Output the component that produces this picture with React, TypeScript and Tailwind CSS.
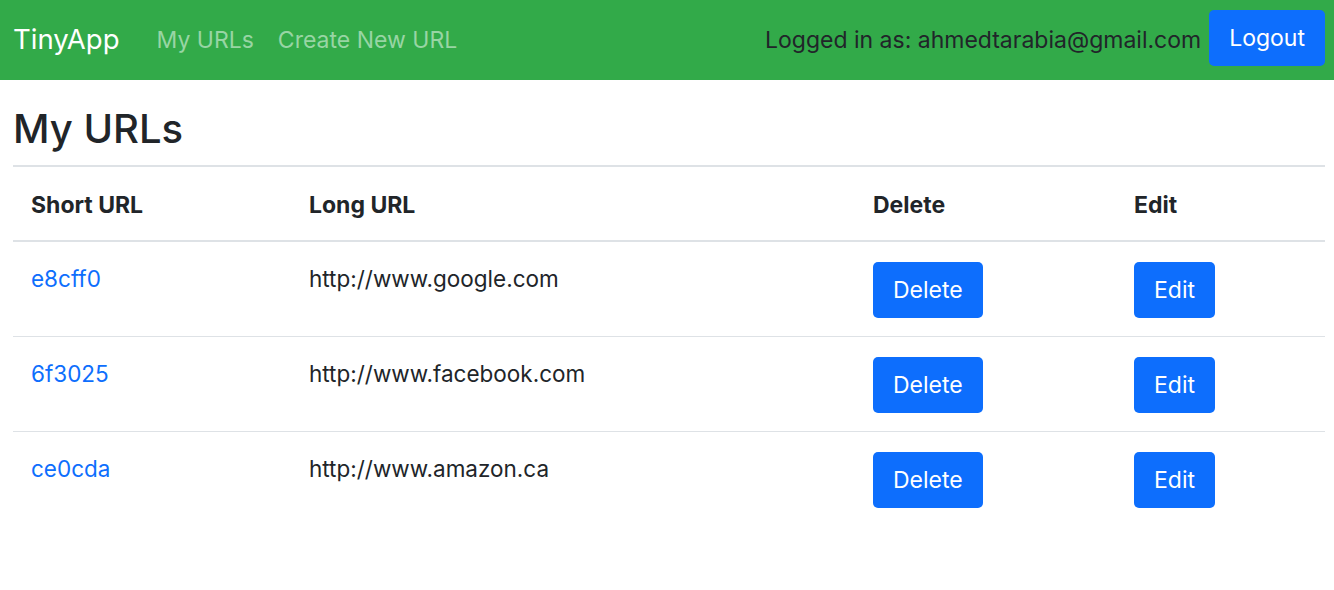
import React from "react";

type UrlRow = {
  short: string;
  long: string;
};

const urls: UrlRow[] = [
  { short: "e8cff0", long: "http://www.google.com" },
  { short: "6f3025", long: "http://www.facebook.com" },
  { short: "ce0cda", long: "http://www.amazon.ca" },
];

function BlueButton({ label, className = "" }: { label: string; className?: string }) {
  return (
    <button
      type="button"
      className={`h-[56px] rounded-[5px] bg-[#0d6efd] px-[20px] text-[23px] leading-none text-white ${className}`}
    >
      {label}
    </button>
  );
}

export default function App() {
  return (
    <div className="min-h-[590px] bg-white font-['Inter','Noto_Sans',sans-serif] text-[22.5px] text-[#212529]">
      <nav className="flex h-[80px] items-center bg-[#32aa49] pl-[13px] pr-[9px] text-[23px]">
        <span className="mr-[37px] text-[27.5px] text-white">TinyApp</span>
        <a className="mr-[24px] text-[#98d5a4]">My URLs</a>
        <a className="text-[#98d5a4]">Create New URL</a>
        <span className="ml-auto mr-[8px] text-[#212529]">Logged in as: ahmedtarabia@gmail.com</span>
        <BlueButton label="Logout" className="mb-[4px] px-[18px]" />
      </nav>

      <main className="px-[13px] pr-[9px]">
        <h1 className="pt-[25px] pb-[12px] text-[40px] leading-[48px] font-medium">My URLs</h1>
        <table className="w-full border-collapse text-left">
          <colgroup>
            <col className="w-[278px]" />
            <col className="w-[564px]" />
            <col className="w-[261px]" />
            <col />
          </colgroup>
          <thead>
            <tr className="border-t-2 border-b-2 border-[#dee2e6] text-[23px]">
              <th className="px-[18px] pt-[22px] pb-[18px] leading-[33px] font-bold">Short URL</th>
              <th className="px-[18px] pt-[22px] pb-[18px] leading-[33px] font-bold">Long URL</th>
              <th className="px-[18px] pt-[22px] pb-[18px] leading-[33px] font-bold">Delete</th>
              <th className="px-[18px] pt-[22px] pb-[18px] leading-[33px] font-bold">Edit</th>
            </tr>
          </thead>
          <tbody>
            {urls.map((url, i) => (
              <tr key={url.short} className={i < urls.length - 1 ? "border-b border-[#dee2e6]" : ""}>
                <td className="px-[18px] pt-[20px] pb-[18px] align-top leading-[33px]">
                  <a className="text-[#0d6efd]">{url.short}</a>
                </td>
                <td className="px-[18px] pt-[20px] pb-[18px] align-top leading-[33px]">{url.long}</td>
                <td className="px-[18px] pt-[20px] pb-[18px] align-top">
                  <BlueButton label="Delete" />
                </td>
                <td className="px-[18px] pt-[20px] pb-[18px] align-top">
                  <BlueButton label="Edit" />
                </td>
              </tr>
            ))}
          </tbody>
        </table>
      </main>
    </div>
  );
}
